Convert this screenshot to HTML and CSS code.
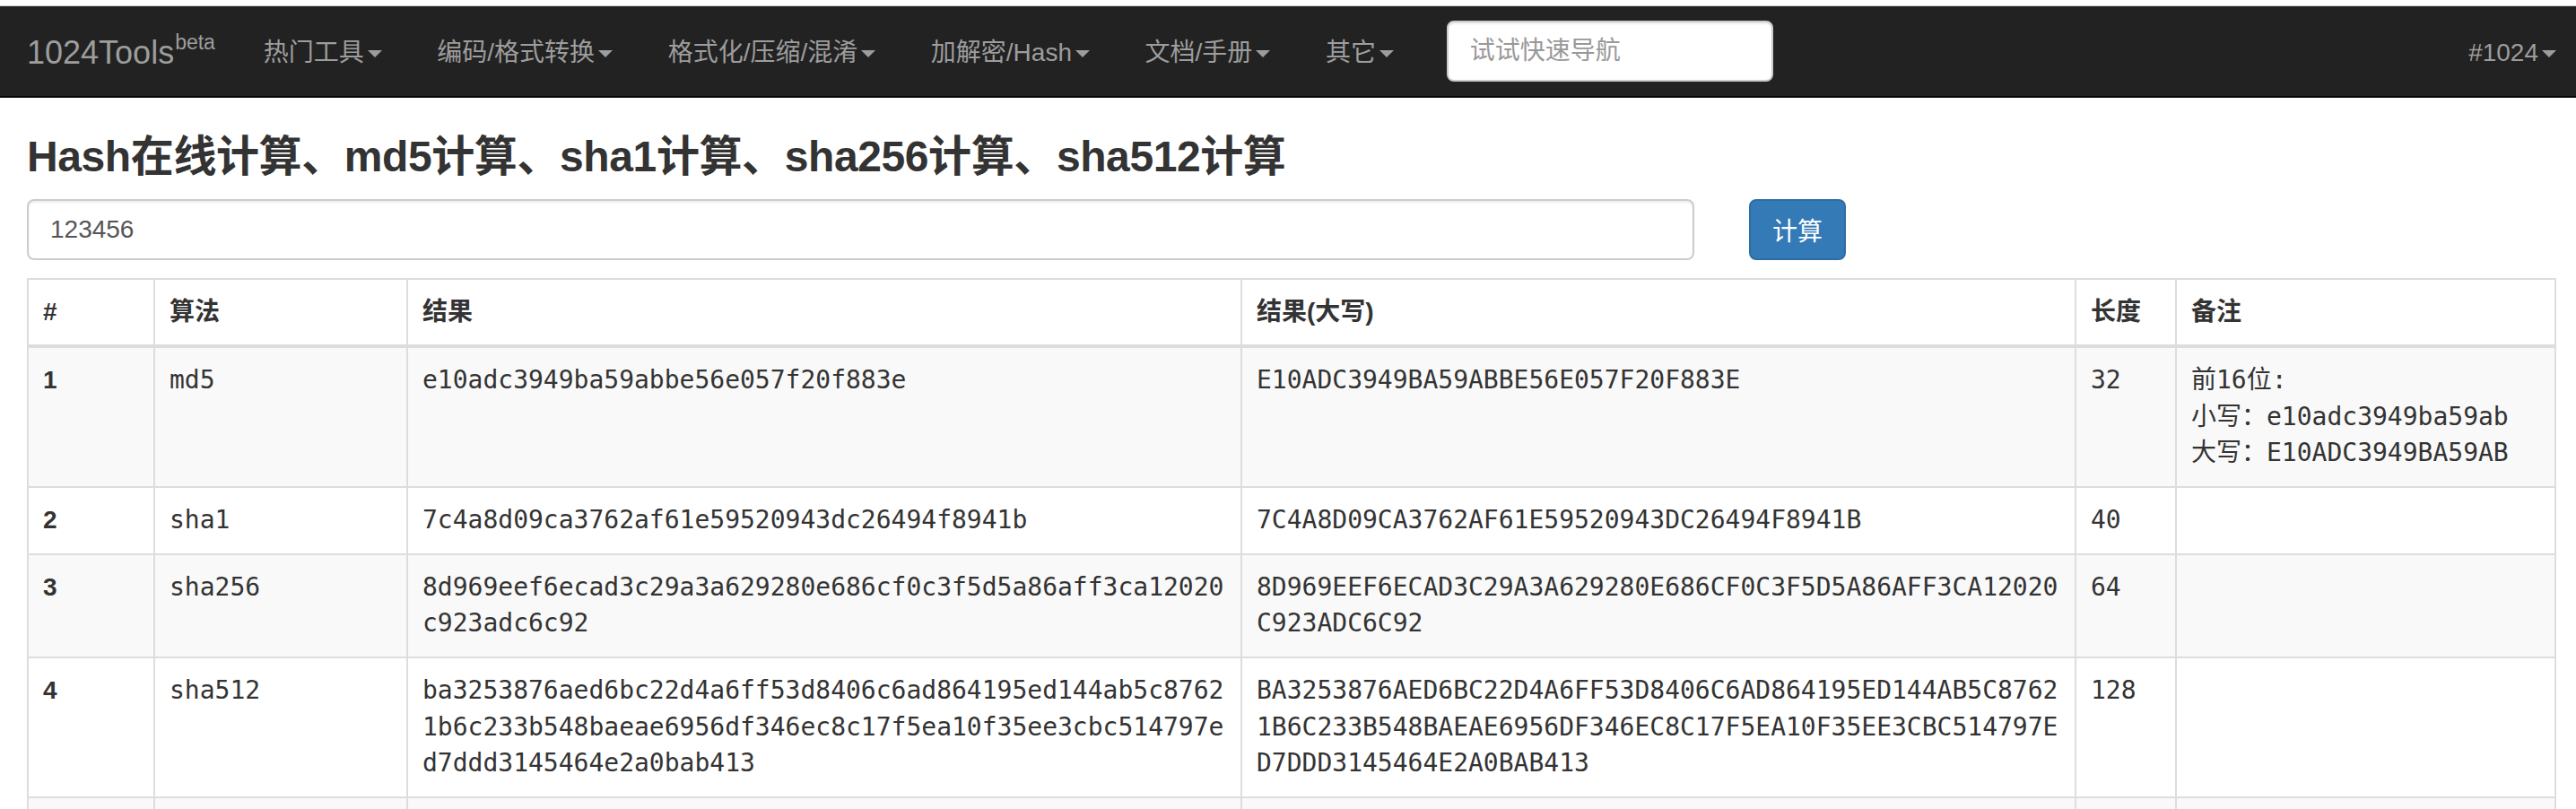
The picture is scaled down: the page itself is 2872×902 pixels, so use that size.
FILE: index.html
```html
<!DOCTYPE html>
<html lang="zh-CN">
<head>
<meta charset="utf-8">
<title>Hash在线计算、md5计算、sha1计算、sha256计算、sha512计算</title>
<link rel="stylesheet" href="styles.css">
</head>
<body>
<nav class="navbar">
  <a class="brand" href="#">1024Tools<sup class="brand-sup">beta</sup></a>
  <ul class="nav">
    <li><a class="nav-link" href="#">热门工具<span class="caret"></span></a></li>
    <li><a class="nav-link" href="#">编码/格式转换<span class="caret"></span></a></li>
    <li><a class="nav-link" href="#">格式化/压缩/混淆<span class="caret"></span></a></li>
    <li><a class="nav-link" href="#">加解密/Hash<span class="caret"></span></a></li>
    <li><a class="nav-link" href="#">文档/手册<span class="caret"></span></a></li>
    <li><a class="nav-link" href="#">其它<span class="caret"></span></a></li>
  </ul>
  <form class="nav-search">
    <input class="nav-search-input" type="text" placeholder="试试快速导航">
  </form>
  <ul class="nav nav-right">
    <li><a class="nav-link nav-link-last" href="#">#1024<span class="caret"></span></a></li>
  </ul>
</nav>

<main class="container">
  <h3 class="page-title">Hash在线计算、md5计算、sha1计算、sha256计算、sha512计算</h3>
  <form class="hash-form">
    <input class="hash-input" type="text" value="123456">
    <button class="btn-primary" type="button">计算</button>
  </form>

  <table class="hash-table">
    <thead>
      <tr>
        <th class="c-idx">#</th>
        <th class="c-alg">算法</th>
        <th class="c-res">结果</th>
        <th class="c-res">结果(大写)</th>
        <th class="c-len">长度</th>
        <th class="c-note">备注</th>
      </tr>
    </thead>
    <tbody>
      <tr>
        <th class="row-idx">1</th>
        <td>md5</td>
        <td>e10adc3949ba59abbe56e057f20f883e</td>
        <td>E10ADC3949BA59ABBE56E057F20F883E</td>
        <td>32</td>
        <td>前16位:<br>小写：e10adc3949ba59ab<br>大写：E10ADC3949BA59AB</td>
      </tr>
      <tr>
        <th class="row-idx">2</th>
        <td>sha1</td>
        <td>7c4a8d09ca3762af61e59520943dc26494f8941b</td>
        <td>7C4A8D09CA3762AF61E59520943DC26494F8941B</td>
        <td>40</td>
        <td></td>
      </tr>
      <tr>
        <th class="row-idx">3</th>
        <td>sha256</td>
        <td>8d969eef6ecad3c29a3a629280e686cf0c3f5d5a86aff3ca12020c923adc6c92</td>
        <td>8D969EEF6ECAD3C29A3A629280E686CF0C3F5D5A86AFF3CA12020C923ADC6C92</td>
        <td>64</td>
        <td></td>
      </tr>
      <tr>
        <th class="row-idx">4</th>
        <td>sha512</td>
        <td>ba3253876aed6bc22d4a6ff53d8406c6ad864195ed144ab5c87621b6c233b548baeae6956df346ec8c17f5ea10f35ee3cbc514797ed7ddd3145464e2a0bab413</td>
        <td>BA3253876AED6BC22D4A6FF53D8406C6AD864195ED144AB5C87621B6C233B548BAEAE6956DF346EC8C17F5EA10F35EE3CBC514797ED7DDD3145464E2A0BAB413</td>
        <td>128</td>
        <td></td>
      </tr>
      <tr class="row-more">
        <th class="row-idx"></th>
        <td></td>
        <td></td>
        <td></td>
        <td></td>
        <td></td>
      </tr>
    </tbody>
  </table>
</main>
</body>
</html>
```

FILE: styles.css
```css
* {
  box-sizing: border-box;
}

html, body {
  margin: 0;
}

body {
  padding-top: 6px;
  font-family: "Liberation Sans", "Noto Sans CJK SC", sans-serif;
  font-size: 28px;
  line-height: 40px;
  color: #333;
  background: #fff;
}

/* ---------- navbar ---------- */
.navbar {
  display: flex;
  align-items: center;
  height: 103px;
  background: #222;
  border-top: 1px solid #d6d6d6;
  border-bottom: 2px solid #080808;
  padding-left: 30px;
}

.brand {
  display: block;
  padding: 4px 23px 0 0;
  font-size: 36px;
  line-height: 40px;
  color: #9d9d9d;
  text-decoration: none;
  white-space: nowrap;
}

.brand-sup {
  position: relative;
  top: -16px;
  margin-left: 1px;
  font-size: 23px;
  line-height: 0;
  vertical-align: baseline;
}

.nav {
  display: flex;
  margin: 0;
  padding: 0;
  list-style: none;
}

.nav-link {
  display: block;
  padding: 3px 30.8px 0;
  line-height: 40px;
  color: #9d9d9d;
  text-decoration: none;
  white-space: nowrap;
}

.nav-right {
  margin-left: auto;
}

.nav-link-last {
  padding-right: 22px;
}

.caret {
  display: inline-block;
  width: 0;
  height: 0;
  margin-left: 4px;
  vertical-align: middle;
  border-top: 8px solid;
  border-left: 8px solid transparent;
  border-right: 8px solid transparent;
}

.nav-search {
  margin: 0 0 0 28px;
}

.nav-search-input {
  display: block;
  width: 364px;
  height: 68px;
  padding: 0 24px;
  font-family: inherit;
  font-size: 28px;
  color: #555;
  background: #fff;
  border: 2px solid #ccc;
  border-radius: 8px;
  box-shadow: inset 0 2px 2px rgba(0, 0, 0, .075);
  outline: none;
}

.nav-search-input::placeholder {
  color: #999;
}

/* ---------- main ---------- */
.container {
  padding: 0 22px 0 30px;
}

.page-title {
  margin: 40px 0 20px;
  font-size: 48px;
  line-height: 1.1;
  font-weight: 700;
  letter-spacing: -0.4px;
  color: #333;
}

.hash-form {
  display: flex;
  align-items: flex-start;
  margin: 0 0 20px;
}

.hash-input {
  display: block;
  width: 1859px;
  height: 68px;
  padding: 0 24px;
  font-family: inherit;
  font-size: 28px;
  color: #555;
  background: #fff;
  border: 2px solid #ccc;
  border-radius: 8px;
  box-shadow: inset 0 2px 2px rgba(0, 0, 0, .075);
  outline: none;
}

.btn-primary {
  display: block;
  height: 68px;
  margin-left: 61px;
  padding: 0 24px;
  font-family: inherit;
  font-size: 28px;
  color: #fff;
  background: #337ab7;
  border: 2px solid #2e6da4;
  border-radius: 8px;
  cursor: pointer;
}

/* ---------- table ---------- */
.hash-table {
  width: 2820px;
  table-layout: fixed;
  border-collapse: separate;
  border-spacing: 0;
  border: 2px solid #ddd;
}

.hash-table th,
.hash-table td {
  padding: 16px;
  line-height: 40.7px;
  text-align: left;
  vertical-align: top;
  border-left: 2px solid #ddd;
}

.hash-table th:first-child {
  border-left: 0;
}

.hash-table thead th {
  line-height: 40px;
  font-weight: 700;
  border-bottom: 4px solid #ddd;
}

.hash-table tbody tr + tr > * {
  border-top: 2px solid #ddd;
}

.hash-table tbody tr:nth-child(odd) {
  background: #f9f9f9;
}

.hash-table td {
  font-family: "DejaVu Sans Mono", "Noto Sans CJK SC", monospace;
  font-size: 28px;
  word-break: break-all;
}

.row-more > * {
  height: 72px;
}

.row-idx {
  font-weight: 700;
}

.c-idx { width: 139px; }
.c-alg { width: 282px; }
.c-res { width: 930px; }
.c-len { width: 112px; }
.c-note { width: 423px; }
```
